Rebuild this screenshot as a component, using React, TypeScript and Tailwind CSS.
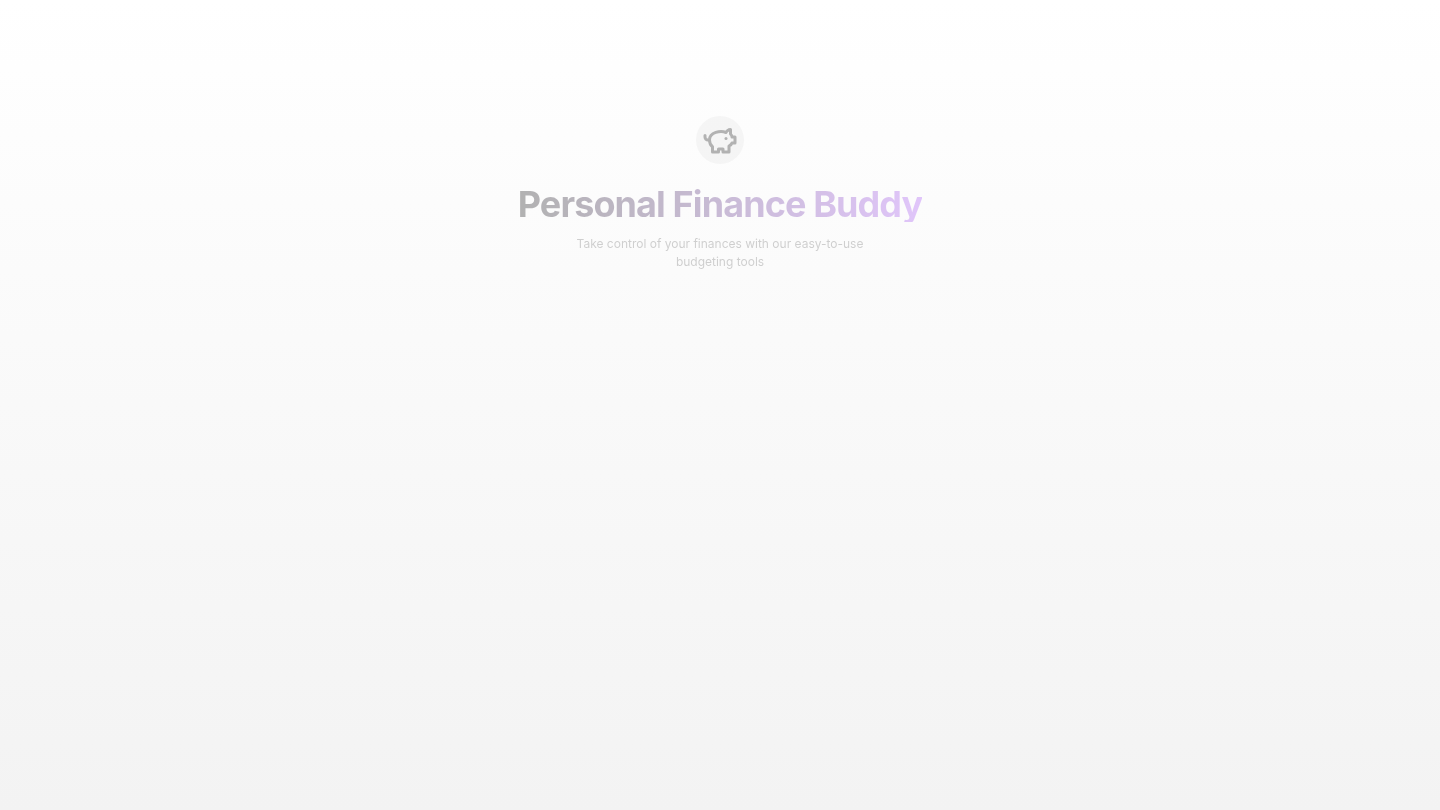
function PiggyIcon() {
  return (
    <svg
      className="size-9 text-[#171717]"
      viewBox="0 0 24 24"
      fill="none"
      stroke="currentColor"
      strokeWidth="2"
      strokeLinecap="round"
      strokeLinejoin="round"
      aria-hidden="true"
    >
      <path d="M19 5c-1.5 0-2.8 1.4-3 2-3.5-1.5-11-.3-11 5 0 1.8 0 3 2 4.5V20h4v-2h3v2h4v-4c1-.5 1.7-1 2-2h2v-4h-2c0-1-.5-1.5-1-2V5z" />
      <path d="M2 9v1c0 1.1.9 2 2 2h1" />
      <path d="M16 11h.01" />
    </svg>
  );
}

export default function App() {
  return (
    <main className="min-h-screen bg-linear-to-b/srgb from-white to-[#f3f3f3] px-4 pt-29 font-['Inter',sans-serif]">
      <header className="mx-auto flex max-w-3xl flex-col items-center text-center opacity-32">
        <div className="flex size-12 items-center justify-center rounded-full bg-[#e6e6e6]">
          <PiggyIcon />
        </div>
        <h1 className="mt-[22px] bg-linear-to-r/srgb from-[#171717] to-[#a855f7] bg-clip-text text-4xl leading-none font-bold tracking-tight text-transparent">
          Personal Finance Buddy
        </h1>
        <p className="mt-[13px] max-w-xs text-xs leading-[18px] text-[#737373]">
          Take control of your finances with our easy-to-use budgeting tools
        </p>
      </header>
    </main>
  );
}
